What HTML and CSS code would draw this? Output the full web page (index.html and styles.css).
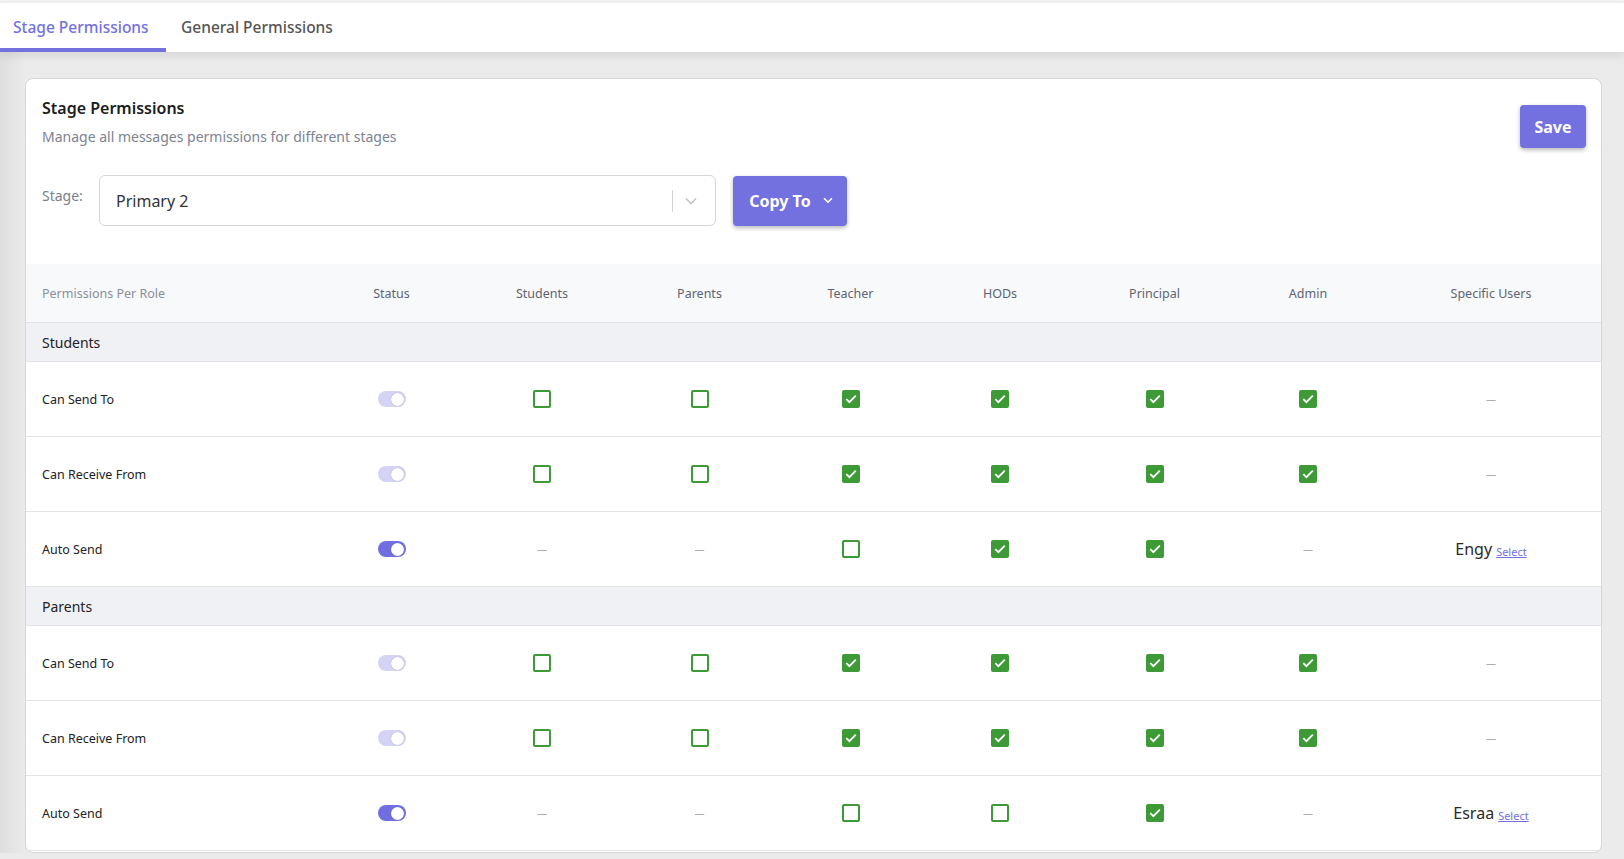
FILE: index.html
```html
<!DOCTYPE html>
<html>
<head>
<meta charset="utf-8">
<link rel="stylesheet" href="styles.css">
</head>
<body>
<div class="topbar">
  <nav class="tabs">
    <div class="tab active">Stage Permissions</div>
    <div class="tab">General Permissions</div>
  </nav>
</div>
<main class="main">
  <section class="card">
    <div class="card-head">
      <div>
        <h1 class="title">Stage Permissions</h1>
        <p class="subtitle">Manage all messages permissions for different stages</p>
      </div>
      <button class="btn save">Save</button>
    </div>
    <div class="stage-row">
      <span class="stage-label">Stage:</span>
      <div class="select">
        <span class="select-value">Primary 2</span>
        <span class="select-sep"></span>
        <svg class="select-chev" width="12" height="8" viewBox="0 0 12 8"><path d="M1 1.5 6 6.5 11 1.5" fill="none" stroke="#c4c4c4" stroke-width="1.6"/></svg>
      </div>
      <button class="btn copy">Copy To
        <svg width="10" height="7" viewBox="0 0 10 7"><path d="M1 1.2 5 5.2 9 1.2" fill="none" stroke="#fff" stroke-width="1.6"/></svg>
      </button>
    </div>

    <div class="table">
      <div class="row head">
        <div class="c first">Permissions Per Role</div>
        <div class="c">Status</div>
        <div class="c">Students</div>
        <div class="c">Parents</div>
        <div class="c">Teacher</div>
        <div class="c">HODs</div>
        <div class="c">Principal</div>
        <div class="c">Admin</div>
        <div class="c">Specific Users</div>
      </div>

      <div class="group">Students</div>
      <div class="row">
        <div class="c first">Can Send To</div>
        <div class="c"><span class="toggle off"></span></div>
        <div class="c"><span class="cb"></span></div>
        <div class="c"><span class="cb"></span></div>
        <div class="c"><span class="cb on"></span></div>
        <div class="c"><span class="cb on"></span></div>
        <div class="c"><span class="cb on"></span></div>
        <div class="c"><span class="cb on"></span></div>
        <div class="c"><span class="dash">—</span></div>
      </div>
      <div class="row">
        <div class="c first">Can Receive From</div>
        <div class="c"><span class="toggle off"></span></div>
        <div class="c"><span class="cb"></span></div>
        <div class="c"><span class="cb"></span></div>
        <div class="c"><span class="cb on"></span></div>
        <div class="c"><span class="cb on"></span></div>
        <div class="c"><span class="cb on"></span></div>
        <div class="c"><span class="cb on"></span></div>
        <div class="c"><span class="dash">—</span></div>
      </div>
      <div class="row">
        <div class="c first">Auto Send</div>
        <div class="c"><span class="toggle"></span></div>
        <div class="c"><span class="dash">—</span></div>
        <div class="c"><span class="dash">—</span></div>
        <div class="c"><span class="cb"></span></div>
        <div class="c"><span class="cb on"></span></div>
        <div class="c"><span class="cb on"></span></div>
        <div class="c"><span class="dash">—</span></div>
        <div class="c"><span class="user">Engy</span><a class="link">Select</a></div>
      </div>

      <div class="group">Parents</div>
      <div class="row">
        <div class="c first">Can Send To</div>
        <div class="c"><span class="toggle off"></span></div>
        <div class="c"><span class="cb"></span></div>
        <div class="c"><span class="cb"></span></div>
        <div class="c"><span class="cb on"></span></div>
        <div class="c"><span class="cb on"></span></div>
        <div class="c"><span class="cb on"></span></div>
        <div class="c"><span class="cb on"></span></div>
        <div class="c"><span class="dash">—</span></div>
      </div>
      <div class="row">
        <div class="c first">Can Receive From</div>
        <div class="c"><span class="toggle off"></span></div>
        <div class="c"><span class="cb"></span></div>
        <div class="c"><span class="cb"></span></div>
        <div class="c"><span class="cb on"></span></div>
        <div class="c"><span class="cb on"></span></div>
        <div class="c"><span class="cb on"></span></div>
        <div class="c"><span class="cb on"></span></div>
        <div class="c"><span class="dash">—</span></div>
      </div>
      <div class="row">
        <div class="c first">Auto Send</div>
        <div class="c"><span class="toggle"></span></div>
        <div class="c"><span class="dash">—</span></div>
        <div class="c"><span class="dash">—</span></div>
        <div class="c"><span class="cb"></span></div>
        <div class="c"><span class="cb"></span></div>
        <div class="c"><span class="cb on"></span></div>
        <div class="c"><span class="dash">—</span></div>
        <div class="c"><span class="user">Esraa</span><a class="link">Select</a></div>
      </div>
    </div>
  </section>
</main>
</body>
</html>
```
FILE: styles.css
```css
* { box-sizing: border-box; }
html, body { margin: 0; padding: 0; }
body {
  font-family: "Noto Sans", "Open Sans", sans-serif;
  background: #ebebeb;
  color: #222;
  height: 859px;
  overflow: hidden;
}
.topbar {
  padding-top: 3px;
  background: #f4f4f4;
  position: relative;
  z-index: 1;
}
.tabs {
  display: flex;
  height: 49px;
  background: #fff;
  box-shadow: 0 3px 10px rgba(0, 0, 0, 0.1);
}
.tab {
  display: flex;
  align-items: center;
  padding: 2px 15px 0;
  font-size: 15.5px;
  font-weight: 500;
  color: #555;
  border-bottom: 4px solid transparent;
}
.tab.active {
  width: 166px;
  padding-left: 13px;
  padding-right: 12px;
  color: #7370e0;
  border-bottom-color: #7370e0;
}
.main {
  padding: 26px 22px 0 25px;
  background: linear-gradient(90deg, #dedede 0, #ebebeb 25px);
}
.card {
  background: #fff;
  border: 1px solid #d7d7d7;
  border-radius: 8px;
  overflow: hidden;
  height: 775px;
}
.card-head {
  display: flex;
  justify-content: space-between;
  align-items: flex-start;
  padding: 18px 15px 0 16px;
}
.title {
  margin: 0;
  font-size: 16px;
  line-height: 22px;
  font-weight: 600;
  color: #1d1d1d;
}
.subtitle {
  margin: 8px 0 0;
  font-size: 14px;
  line-height: 20px;
  color: #7c8391;
}
.btn {
  font-family: inherit;
  border: 0;
  background: #7370e0;
  color: #fff;
  font-weight: 700;
  font-size: 16px;
  border-radius: 4px;
  box-shadow: 0 2px 4px rgba(0, 0, 0, 0.28);
}
.save {
  margin-top: 8px;
  height: 43px;
  width: 66px;
  padding: 0;
}
.stage-row {
  display: flex;
  align-items: center;
  padding: 27px 15px 0 16px;
}
.stage-label {
  font-size: 14px;
  color: #7a7f88;
  width: 57px;
  margin-top: -10px;
}
.select {
  width: 617px;
  height: 51px;
  border: 1px solid #d6d6d6;
  border-radius: 6px;
  display: flex;
  align-items: center;
  padding: 0 18px 0 16px;
}
.select-value {
  flex: 1;
  font-size: 16px;
  color: #333;
}
.select-sep {
  width: 1px;
  height: 22px;
  background: #d2d2d2;
  margin-right: 12px;
}
.copy {
  margin-left: 17px;
  width: 114px;
  height: 50px;
  display: flex;
  align-items: center;
  justify-content: center;
  gap: 12px;
  padding: 0 0 0 2px;
}
.table {
  margin-top: 38px;
}
.row {
  display: grid;
  grid-template-columns: 297px 137px 164px 151px 151px 148px 161px 146px 220px;
  height: 75px;
  border-bottom: 1px solid #e4e4e4;
}
.row.head {
  height: 59px;
  background: #f8f9fb;
  border-bottom-color: #e2e3e6;
}
.c {
  display: flex;
  align-items: center;
  justify-content: center;
  font-size: 12.5px;
  color: #222;
}
.c.first {
  justify-content: flex-start;
  padding-left: 16px;
}
.head .c {
  color: #5e6471;
  font-size: 12.5px;
}
.head .c.first {
  color: #8a8f99;
}
.group {
  height: 39px;
  background: #f0f1f4;
  border-bottom: 1px solid #e2e3e6;
  display: flex;
  align-items: center;
  padding-left: 16px;
  font-size: 14px;
  color: #222;
}
.toggle {
  display: inline-block;
  position: relative;
  width: 28px;
  height: 16px;
  border-radius: 8px;
  background: #716ee0;
}
.toggle::after {
  content: "";
  position: absolute;
  top: 1.5px;
  right: 1.5px;
  width: 13px;
  height: 13px;
  border-radius: 50%;
  background: #fff;
  box-shadow: 0 0 1px rgba(0, 0, 0, 0.3);
}
.toggle.off {
  background: #d4d3f6;
}
.cb {
  display: inline-block;
  width: 18px;
  height: 18px;
  border: 2px solid #3d9a37;
  border-radius: 2px;
  background: #fff;
}
.cb.on {
  background: #3d9a37 url("data:image/svg+xml;utf8,<svg xmlns='http://www.w3.org/2000/svg' width='14' height='14' viewBox='0 0 14 14'><path d='M2.3 7.2 5.4 10.2 11.8 3.6' fill='none' stroke='white' stroke-width='1.8'/></svg>") center/14px 14px no-repeat;
}
.dash {
  font-size: 10px;
  color: #a9adb6;
}
.user {
  font-size: 16px;
  color: #2a2a2a;
  margin-right: 4px;
}
.link {
  font-size: 11px;
  color: #7370e0;
  text-decoration: underline;
  margin-top: 5px;
}
```
